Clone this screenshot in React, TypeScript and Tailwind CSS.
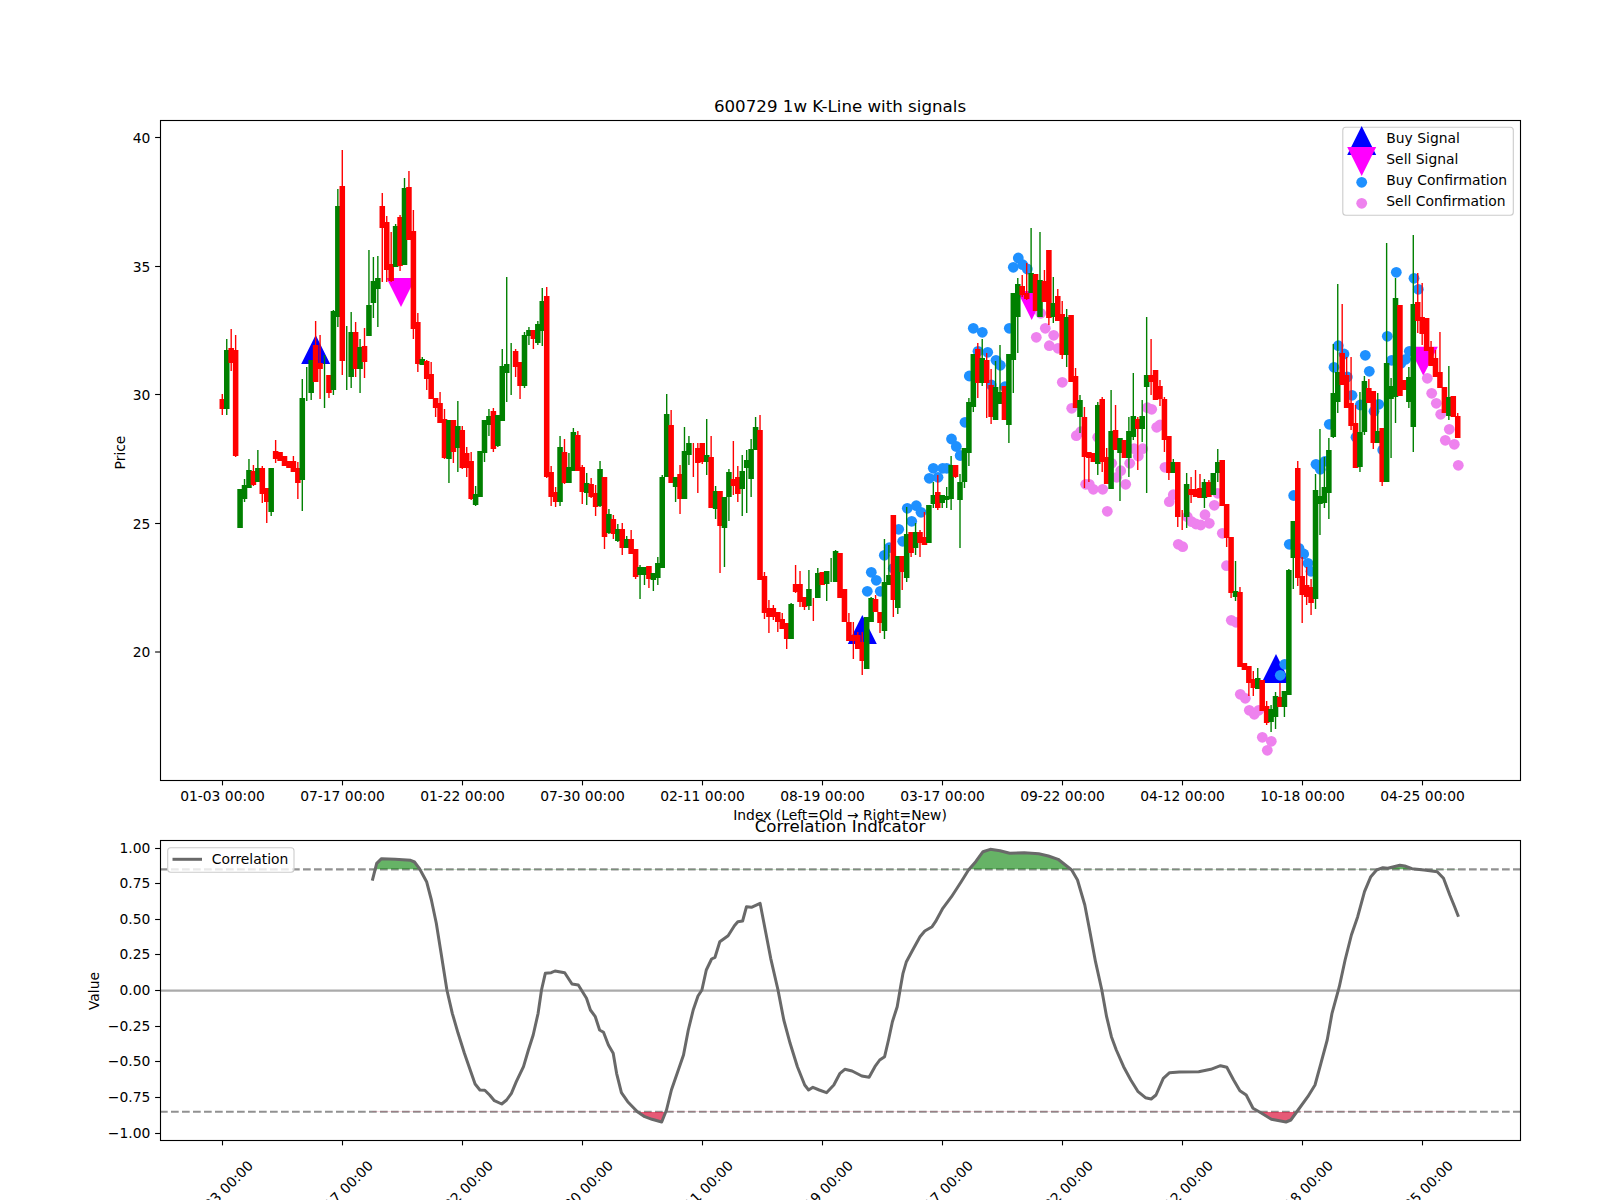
const RED = "#ff0000"
const GREEN = "#008000"

// color, body top, body bottom, wick top, wick bottom (pixel y)
const candles = `r 399 409 394 415,g 350 409 339 415,r 348 363 329 371,r 350 456 335 457,g 489 528 489 528,g 485 499 479 502,g 470 488 459 488,r 471 485 465 486,g 468 482 450 482,r 468 494 466 503,
r 488 502 488 523,g 468 512 468 516,r 451 459 440 463,r 452 461 452 461,r 456 466 456 466,r 461 468 461 468,r 461 472 456 472,r 468 483 462 499,g 398 480 379 511,g 397 397 367 401,
g 360 393 360 400,r 345 382 321 382,r 363 369 335 399,g 363 363 355 408,r 375 393 375 398,g 311 390 310 395,g 206 317 189 327,r 186 361 150 375,g 326 326 326 390,g 332 377 312 388,
r 332 369 322 377,g 347 369 339 393,r 346 362 328 378,g 305 336 250 336,g 281 303 257 318,g 278 289 256 327,r 206 228 193 282,r 222 270 216 282,r 264 281 232 282,g 226 267 224 267,
r 217 266 215 271,g 188 265 178 265,r 187 240 171 240,r 231 329 210 339,r 322 364 313 372,g 359 365 357 365,r 361 379 360 390,r 374 399 362 399,r 398 408 398 417,r 403 423 392 423,
r 419 458 409 459,g 420 459 420 483,r 420 452 420 463,g 426 448 401 472,r 430 468 426 469,r 453 468 447 477,r 461 499 452 500,g 494 505 486 506,g 451 497 451 497,g 420 453 420 462,
g 416 425 409 436,r 411 449 408 452,g 415 446 415 447,g 366 421 349 421,g 364 373 277 402,g 370 370 343 395,r 351 367 349 377,r 362 386 362 399,g 335 386 332 388,g 330 336 327 345,
r 330 339 330 349,g 324 343 321 345,g 301 331 288 346,r 296 477 287 478,r 472 497 466 506,r 492 502 487 507,g 447 502 436 506,r 452 483 439 484,g 467 483 453 483,g 432 471 428 471,
r 435 471 431 471,r 467 492 465 504,g 483 493 473 505,r 484 497 478 498,r 493 507 485 516,g 469 506 461 507,r 477 537 477 549,g 514 533 509 534,r 519 534 515 539,g 529 541 524 542,
r 529 548 523 555,g 539 548 536 548,r 539 554 530 554,r 549 577 549 579,g 567 575 565 599,g 567 575 567 585,r 566 579 566 588,g 573 580 573 591,g 563 578 557 585,g 477 568 475 568,
g 414 477 394 477,r 425 483 410 483,g 477 487 477 502,r 474 499 465 514,g 451 499 427 499,g 443 455 436 465,r 450 450 443 477,r 448 463 443 493,r 443 462 443 464,g 455 462 419 475,
r 457 508 436 508,g 491 509 486 519,r 491 526 491 573,g 497 528 497 567,g 472 497 469 521,r 479 486 441 495,r 477 494 466 502,g 471 489 455 516,g 460 468 450 513,g 449 479 439 497,
g 427 450 417 450,r 430 580 415 580,r 576 613 572 619,r 608 617 600 633,r 608 617 605 620,r 612 622 612 632,r 619 629 613 629,r 623 639 623 649,g 604 639 603 639,r 584 592 565 593,
r 584 602 571 607,r 597 607 597 610,g 589 606 570 610,r 598 598 598 621,g 573 598 568 598,r 572 585 572 585,g 571 584 571 601,g 560 560 558 582,g 551 582 550 582,r 553 598 553 598,
r 589 622 589 622,r 622 641 613 641,r 635 641 622 659,r 635 649 632 649,r 642 661 632 675,g 617 669 617 669,g 598 622 597 622,r 599 612 595 612,r 612 623 612 633,g 582 631 539 639,
g 575 585 545 585,r 515 600 515 617,g 556 608 556 614,r 556 572 556 590,g 534 578 507 582,r 532 553 532 557,g 532 548 523 555,r 532 543 530 557,r 537 545 512 545,g 505 543 505 543,
g 495 504 482 508,r 492 508 475 510,g 495 503 495 508,g 496 500 487 508,g 465 499 456 510,r 465 477 465 478,g 482 500 474 548,g 448 482 448 488,g 402 453 398 466,g 354 407 354 412,
r 349 383 343 398,g 358 383 339 386,r 360 383 353 418,r 385 417 369 424,g 387 420 361 420,g 392 404 345 404,r 386 420 386 420,g 354 425 354 443,g 293 360 293 393,g 284 317 278 353,
r 286 295 275 297,r 293 299 263 300,g 273 293 228 293,r 274 311 274 311,g 280 317 232 317,r 281 302 270 302,r 250 318 250 325,g 303 317 277 323,r 296 321 289 321,r 314 355 301 359,
g 317 355 309 367,r 315 382 315 382,r 376 408 368 408,g 400 417 395 433,r 417 457 407 488,r 452 458 452 482,r 453 462 453 462,g 405 464 402 475,r 399 462 397 472,r 457 484 448 484,
g 431 489 390 489,r 430 450 405 450,g 438 453 438 501,r 440 458 440 458,g 431 458 417 477,g 416 437 373 440,r 419 429 417 470,g 416 429 400 442,g 375 387 317 493,r 375 382 339 395,
r 370 400 370 400,r 386 399 380 406,r 399 440 397 452,r 436 473 436 480,g 462 473 459 473,r 462 517 462 527,r 510 510 510 530,g 484 517 473 528,r 489 495 477 503,r 489 497 470 497,
r 488 498 474 498,g 482 498 479 508,r 482 497 480 497,g 473 495 473 495,g 462 473 449 482,r 460 506 460 506,r 504 538 504 547,r 537 593 537 598,g 591 597 561 601,r 592 667 587 667,
r 663 670 663 670,r 666 683 666 696,r 679 688 671 696,g 678 689 668 689,r 680 711 680 711,r 706 723 701 725,g 709 722 705 732,g 696 717 692 729,r 697 707 683 707,g 691 707 691 717,
g 570 695 569 695,g 521 558 521 589,r 468 578 461 586,r 576 595 557 623,r 585 597 567 605,r 587 603 579 615,g 490 599 474 609,g 496 504 429 535,g 487 503 457 508,g 450 493 438 519,
g 393 437 344 438,g 372 402 284 413,r 353 385 304 385,r 375 408 357 408,r 403 426 357 430,r 423 468 405 468,g 432 467 392 472,g 381 432 376 435,r 388 403 379 403,r 391 443 391 449,
g 431 443 393 443,r 428 482 428 486,g 363 482 243 482,g 386 399 378 458,g 298 397 278 423,r 305 396 305 396,r 380 390 380 390,g 377 402 367 408,g 304 427 235 452,r 302 321 273 333,
r 317 334 283 345,r 318 351 318 351,r 347 366 341 366,r 358 377 350 377,r 372 388 332 388,r 387 413 387 413,g 397 416 366 420,r 396 417 396 417,r 416 438 413 438`
  .split(",")
  .map((row) => {
    const [c, top, bottom, wickTop, wickBottom] = row.trim().split(" ")
    return { color: c === "r" ? RED : GREEN, top: +top, bottom: +bottom, wickTop: +wickTop, wickBottom: +wickBottom }
  })

const candleX = (i: number) => 222.3 + 4.444 * i

const buyDots = [
  [867.3, 591.3], [871.3, 572.3], [876.3, 580.3], [880.3, 591.3], [884.3, 555.3], [889.3, 547.7], [893.3, 568.3], [902.7, 541.3],
  [898.7, 529.3], [907.3, 508.3], [911.7, 521.3], [916.3, 505.7], [921, 512.3], [929.3, 478.3], [933.3, 468.3], [938, 477.3],
  [942.7, 468.3], [946.7, 468.3], [951.5, 439], [956.3, 446.5], [960.2, 455.5], [965, 422.3], [969.3, 376], [978, 351.3],
  [973.3, 328.3], [982.3, 332.3], [987.7, 352.3], [991.3, 385], [996, 360.3], [1000.3, 365.3], [1005, 386.7], [1009.3, 328.3],
  [1013.3, 267.3], [1018.3, 258], [1022.7, 264.7], [1027.3, 269], [1293.7, 495.5], [1316, 464.3], [1320.3, 469.3], [1325, 461.3],
  [1329.3, 424.3], [1334, 367.3], [1338.3, 345.7], [1344, 354], [1347.3, 377], [1352, 395.3], [1356, 437.3], [1360.3, 405],
  [1365.3, 355.3], [1369.3, 371.3], [1374, 411.3], [1378.7, 404.3], [1382.7, 450], [1387.3, 336.3], [1391.7, 360.3], [1396.3, 272.3],
  [1401, 363.3], [1405.7, 359.3], [1409.3, 351.3], [1414, 278.3], [1418.3, 289.3], [1289.3, 544.3], [1299, 548.3], [1303.7, 554],
  [1308, 563.3], [1311, 571.3], [1284.7, 664.3], [1280.3, 675.3],
]

const sellDots = [
  [1040.7, 313.3], [1036.3, 337.3], [1045.3, 328.3], [1053.7, 335.3], [1049.3, 345.7], [1058, 348.3], [1062.3, 382.3], [1071.7, 408.3],
  [1076.3, 435.7], [1080.7, 431.7], [1097.7, 437.3], [1085.7, 484.3], [1089.3, 484.3], [1093.3, 489.3], [1102.7, 489.3], [1107.3, 511.3],
  [1111.7, 463.3], [1116.7, 477.3], [1120.7, 470.7], [1125.7, 484.3], [1129.7, 463.3], [1134, 448.7], [1138.3, 456], [1142.7, 448.7],
  [1147.3, 407.7], [1151.7, 409.3], [1156.7, 427.3], [1160, 425], [1165, 467.3], [1169.3, 501.7], [1173.3, 494.7], [1178.3, 544.3],
  [1182.7, 546.7], [1187.3, 516.7], [1191.7, 521.7], [1196, 524], [1200.7, 525], [1205, 514.7], [1209.3, 523.3], [1214.3, 505.3],
  [1217.7, 493.3], [1222.3, 533.3], [1226.5, 565.7], [1231.3, 620.3], [1236, 622.3], [1240.3, 694.3], [1245.3, 698.3], [1249.3, 710.3],
  [1254.3, 714.3], [1258.7, 710.3], [1262.3, 737.3], [1271.3, 741.3], [1267.3, 750.3], [1427.3, 378.3], [1431.7, 393.3], [1436.3, 403.3],
  [1440.7, 414.3], [1449.3, 429.3], [1445.3, 440.3], [1454.3, 444.3], [1458.3, 465.3],
]

const buySignals = [[315.7, 335], [862.3, 615], [1276, 654]]
const sellSignals = [[401, 307], [1031.7, 320], [1423.3, 375.7]]

// correlation line, read off in two halves of the lower panel
const corrLeft = [
  [603, 302], [612, 250], [622, 236], [650, 238], [682, 241], [690, 246], [700, 265], [715, 305], [725, 360], [735, 430], [745, 520], [757, 630],
  [768, 700], [780, 760], [793, 820], [805, 870], [815, 912], [825, 930], [835, 931], [845, 945], [855, 962], [870, 972], [880, 960], [890, 940],
  [900, 905], [915, 860], [925, 810], [935, 765], [945, 700], [952, 630], [960, 580], [972, 578], [980, 573], [1000, 578], [1015, 612], [1028, 615],
  [1045, 655], [1053, 690], [1063, 710], [1072, 750], [1080, 757], [1090, 795], [1100, 820], [1107, 880], [1117, 938], [1130, 965], [1150, 995],
  [1165, 1010], [1180, 1018], [1200, 1026], [1210, 990], [1220, 930], [1232, 880], [1245, 825], [1255, 750], [1265, 690], [1275, 648], [1283, 630],
  [1292, 570], [1303, 537], [1310, 532], [1320, 485], [1337, 467], [1350, 437], [1357, 425], [1367, 423], [1375, 380], [1385, 382], [1403, 370],
  [1415, 460], [1425, 535], [1440, 630], [1452, 720], [1465, 790], [1480, 860], [1495, 915], [1503, 930], [1512, 922], [1525, 930], [1540, 938],
  [1555, 915],
]
const corrRight = [
  [0, 880], [10, 868], [25, 873], [45, 888], [60, 892], [72, 860], [82, 840], [92, 830], [100, 780], [108, 725], [118, 680], [125, 620], [130, 580],
  [137, 545], [150, 510], [165, 470], [175, 453], [190, 440], [197, 425], [212, 385], [230, 350], [250, 305], [265, 270], [280, 245], [295, 215],
  [310, 208], [330, 212], [350, 220], [380, 218], [410, 221], [430, 228], [450, 238], [465, 255], [478, 270], [490, 300], [505, 375], [515, 450],
  [527, 545], [540, 630], [550, 710], [560, 770], [570, 810], [585, 860], [600, 900], [615, 935], [630, 953], [642, 957], [652, 945], [667, 895],
  [680, 878], [700, 876], [740, 875], [765, 868], [785, 857], [798, 862], [812, 900], [825, 932], [838, 945], [852, 985], [870, 1000], [890, 1018],
  [920, 1026], [930, 1020], [945, 990], [965, 950], [980, 915], [992, 850], [1005, 780], [1015, 700], [1030, 620], [1042, 540], [1055, 465],
  [1068, 410], [1082, 335], [1095, 290], [1107, 270], [1120, 263], [1130, 265], [1155, 256], [1165, 258], [1180, 266], [1205, 270], [1232, 275],
  [1245, 295], [1258, 345], [1268, 380], [1276, 410],
]

const corrPoints = [
  ...corrLeft.map(([x, y]) => [80 + x / 2.063, 780 + y / 3]),
  ...corrRight.map(([x, y]) => [840 + x / 2.063, 780 + y / 3]),
]
const corrLine = corrPoints.map(([x, y]) => `${x.toFixed(1)},${y.toFixed(1)}`).join(" ")

const UPPER = 869.4
const LOWER = 1111.8

const areaTo = (level: number) =>
  `${corrPoints[0][0].toFixed(1)},${level} ${corrLine} ${corrPoints[corrPoints.length - 1][0].toFixed(1)},${level}`

const dates = ["01-03", "07-17", "01-22", "07-30", "02-11", "08-19", "03-17", "09-22", "04-12", "10-18", "04-25"]
const tickX = (i: number) => Math.floor(222.5 + 120.04 * i) + 0.5

const priceTicks = [
  { label: "40", y: 137.5 },
  { label: "35", y: 266.5 },
  { label: "30", y: 394.5 },
  { label: "25", y: 523.5 },
  { label: "20", y: 652 },
]

const valueTicks = ["1.00", "0.75", "0.50", "0.25", "0.00", "−0.25", "−0.50", "−0.75", "−1.00"].map((label, i) => ({
  label,
  y: Math.floor(848 + 35.65 * i) + 0.5,
}))

const triangleUp = (x: number, apex: number) => `${x},${apex} ${x + 14.5},${apex + 29} ${x - 14.5},${apex + 29}`
const triangleDown = (x: number, apex: number) => `${x},${apex} ${x + 14.5},${apex - 29} ${x - 14.5},${apex - 29}`

function Candles() {
  return (
    <g>
      {candles.map((c, i) => {
        const x = candleX(i)
        return (
          <g key={i} stroke={c.color}>
            <line x1={x} x2={x} y1={c.wickTop} y2={c.wickBottom} strokeWidth={1.39} />
            {c.bottom > c.top && <line x1={x} x2={x} y1={c.top} y2={c.bottom} strokeWidth={5.55} />}
          </g>
        )
      })}
    </g>
  )
}

function Legend() {
  return (
    <g>
      <rect x={1342.8} y={127.3} width={170.5} height={88} rx={3} fill="#ffffff" fillOpacity={0.8} stroke="#cccccc" strokeWidth={1.1} />
      <polygon points={triangleUp(1361.7, 126)} fill="#0000ff" />
      <polygon points={triangleDown(1361.7, 176)} fill="#ff00ff" />
      <circle cx={1361.7} cy={182.3} r={5.4} fill="#1e90ff" />
      <circle cx={1361.7} cy={203.3} r={5.4} fill="#ee82ee" />
      <text x={1386.3} y={143.2}>Buy Signal</text>
      <text x={1386.3} y={164.1}>Sell Signal</text>
      <text x={1386.3} y={185}>Buy Confirmation</text>
      <text x={1386.3} y={205.9}>Sell Confirmation</text>
    </g>
  )
}

export default function App() {
  return (
    <div className="w-[1600px] h-[1200px] bg-white overflow-hidden">
      <svg
        width={1600}
        height={1200}
        viewBox="0 0 1600 1200"
        className="block font-['DejaVu_Sans',sans-serif] text-[13.89px] fill-black"
      >
        {/* Price panel */}
        <text x={840} y={112} textAnchor="middle" className="text-[16.67px]">600729 1w K-Line with signals</text>

        {buySignals.map(([x, y]) => (
          <polygon key={x} points={triangleUp(x, y)} fill="#0000ff" />
        ))}
        {sellSignals.map(([x, y]) => (
          <polygon key={x} points={triangleDown(x, y)} fill="#ff00ff" />
        ))}
        {buyDots.map(([x, y], i) => (
          <circle key={i} cx={x} cy={y} r={5.4} fill="#1e90ff" />
        ))}
        {sellDots.map(([x, y], i) => (
          <circle key={i} cx={x} cy={y} r={5.4} fill="#ee82ee" />
        ))}
        <Candles />

        <rect x={160.5} y={120.5} width={1360} height={660} fill="none" stroke="#000000" strokeWidth={1.11} />
        <Legend />

        {priceTicks.map((t) => (
          <g key={t.label}>
            <line x1={155.1} x2={160} y1={t.y} y2={t.y} stroke="#000000" strokeWidth={1.11} />
            <text x={150.3} y={t.y + 5} textAnchor="end">{t.label}</text>
          </g>
        ))}
        {dates.map((d, i) => (
          <g key={d}>
            <line x1={tickX(i)} x2={tickX(i)} y1={781} y2={785.4} stroke="#000000" strokeWidth={1.11} />
            <text x={tickX(i)} y={801} textAnchor="middle">{d} 00:00</text>
          </g>
        ))}
        <text x={840} y={820} textAnchor="middle">Index (Left=Old → Right=New)</text>
        <text x={125} y={452.5} textAnchor="middle" transform="rotate(-90 125 452.5)">Price</text>

        {/* Correlation panel */}
        <text x={840} y={832} textAnchor="middle" className="text-[16.67px]">Correlation Indicator</text>

        <clipPath id="above-upper">
          <rect x={160} y={840} width={1360} height={UPPER - 840} />
        </clipPath>
        <clipPath id="below-lower">
          <rect x={160} y={LOWER} width={1360} height={1140 - LOWER} />
        </clipPath>

        <line x1={160} x2={1520} y1={990.6} y2={990.6} stroke="#aaaaaa" strokeWidth={2.08} />
        <line x1={160} x2={1520} y1={UPPER} y2={UPPER} stroke="#919191" strokeWidth={2.08} strokeDasharray="7.7 3.3" />
        <line x1={160} x2={1520} y1={LOWER} y2={LOWER} stroke="#919191" strokeWidth={2.08} strokeDasharray="7.7 3.3" />

        <polygon points={areaTo(UPPER)} fill="#008000" fillOpacity={0.6} clipPath="url(#above-upper)" />
        <polygon points={areaTo(LOWER)} fill="#dc143c" fillOpacity={0.7} clipPath="url(#below-lower)" />
        <polyline points={corrLine} fill="none" stroke="#696969" strokeWidth={3} strokeLinejoin="round" />

        <rect x={160.5} y={840.5} width={1360} height={300} fill="none" stroke="#000000" strokeWidth={1.11} />

        <rect x={167.7} y={847.7} width={126.3} height={24.6} rx={3} fill="#ffffff" fillOpacity={0.8} stroke="#cccccc" strokeWidth={1.1} />
        <line x1={172.5} x2={202} y1={859.3} y2={859.3} stroke="#696969" strokeWidth={3} />
        <text x={211.8} y={864.3}>Correlation</text>

        {valueTicks.map((t) => (
          <g key={t.label}>
            <line x1={155.1} x2={160} y1={t.y} y2={t.y} stroke="#000000" strokeWidth={1.11} />
            <text x={150.3} y={t.y + 4.3} textAnchor="end">{t.label}</text>
          </g>
        ))}
        {dates.map((d, i) => (
          <g key={d}>
            <line x1={tickX(i)} x2={tickX(i)} y1={1141} y2={1145.4} stroke="#000000" strokeWidth={1.11} />
            <text
              x={tickX(i) - 2}
              y={1198}
              textAnchor="middle"
              transform={`rotate(-45 ${tickX(i) - 2} 1193)`}
            >
              {d} 00:00
            </text>
          </g>
        ))}
        <text x={99} y={991} textAnchor="middle" transform="rotate(-90 99 991)">Value</text>
      </svg>
    </div>
  )
}
